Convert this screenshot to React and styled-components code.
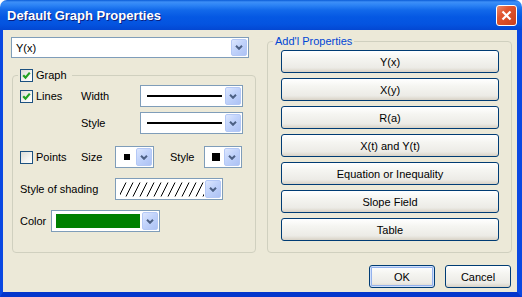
import React from 'react';
import styled, { createGlobalStyle } from 'styled-components';

const GlobalStyle = createGlobalStyle`
  html, body {
    margin: 0;
    padding: 0;
    background: #ffffff;
  }
  body {
    font-family: 'Liberation Sans', Arial, sans-serif;
    font-size: 11px;
    color: #000;
  }
  * {
    box-sizing: border-box;
  }
`;

const Window = styled.div`
  width: 522px;
  height: 297px;
  display: flex;
  flex-direction: column;
  border-radius: 7px 7px 0 0;
  overflow: hidden;
`;

const TitleBar = styled.div`
  height: 30px;
  flex: none;
  display: flex;
  align-items: center;
  justify-content: space-between;
  padding: 1px 5px 0 7px;
  background: linear-gradient(
    180deg,
    #0a5bd6 0px,
    #3d8ff7 2px,
    #2d84f5 5px,
    #1269ea 10px,
    #0558e3 17px,
    #0454e0 24px,
    #0347d2 30px
  );
`;

const Title = styled.span`
  font-family: 'Liberation Sans', Arial, sans-serif;
  font-weight: bold;
  font-size: 13px;
  color: #ffffff;
  text-shadow: 1px 1px 0 #0a1f7e;
`;

const CloseButton = styled.div`
  width: 21px;
  height: 21px;
  border: 1px solid #ffffff;
  border-radius: 3px;
  background: linear-gradient(135deg, #ec8a6c 0%, #e1562f 35%, #c9401b 100%);
  display: flex;
  align-items: center;
  justify-content: center;
`;

const Body = styled.div`
  flex: 1;
  background: #ece9d8;
  border-style: solid;
  border-color: #0a48e2;
  border-bottom-color: #0436cc;
  border-width: 0 5px 5px 3px;
  padding: 5px 5px 4px 8px;
  display: flex;
  flex-direction: column;
`;

const MainRow = styled.div`
  display: flex;
  gap: 11px;
  align-items: flex-start;
`;

const LeftColumn = styled.div`
  width: 245px;
  display: flex;
  flex-direction: column;
  padding-top: 2px;
`;

const Group = styled.fieldset`
  margin: ${(p) => p.$margin};
  width: ${(p) => p.$w}px;
  min-width: 0;
  border: 1px solid #d0d0bf;
  border-radius: 4px;
  padding: ${(p) => p.$pad};
`;

const Legend = styled.legend`
  padding: 0 ${(p) => p.$pr}px 0 2px;
  margin-left: ${(p) => p.$ml}px;
  height: 13px;
  line-height: 13px;
  display: flex;
  align-items: center;
  gap: 3px;
  color: ${(p) => p.$color || '#000'};
`;

const Row = styled.div`
  display: flex;
  align-items: center;
  height: 22px;
  margin-top: ${(p) => p.$top || 0}px;
`;

const Cell = styled.div`
  flex: none;
  width: ${(p) => p.$w}px;
  display: flex;
  align-items: center;
  gap: 3px;
`;

const Box = styled.span`
  flex: none;
  width: 13px;
  height: 13px;
  border: 1px solid #1c5180;
  background: linear-gradient(135deg, #dcdcd7 0%, #f4f4f1 60%, #ffffff 100%);
  display: flex;
  align-items: center;
  justify-content: center;
`;

const Combo = styled.div`
  flex: none;
  width: ${(p) => p.$w}px;
  height: ${(p) => p.$h || 22}px;
  border: 1px solid #7f9db9;
  background: #ffffff;
  padding: 1px;
  display: flex;
`;

const ComboValue = styled.div`
  flex: 1;
  display: flex;
  align-items: center;
  padding-left: ${(p) => p.$pl || 0}px;
`;

const ComboButton = styled.div`
  flex: none;
  width: 16px;
  border: 1px solid #b4c8f6;
  border-radius: 2px;
  background: linear-gradient(135deg, #dde7fe 0%, #c1d3fb 45%, #adc2f4 100%);
  display: flex;
  align-items: center;
  justify-content: center;
`;

const SolidLine = styled.div`
  width: 75px;
  height: 2px;
  background: #000;
`;

const Square = styled.div`
  width: ${(p) => p.$s}px;
  height: ${(p) => p.$s}px;
  background: #000;
`;

const Swatch = styled.div`
  width: 84px;
  height: 14px;
  background: ${(p) => p.$color};
`;

const Buttons = styled.div`
  display: flex;
  flex-direction: column;
  gap: 5px;
`;

const XPButton = styled.div`
  height: 23px;
  width: ${(p) => (p.$w ? `${p.$w}px` : 'auto')};
  border: 1px solid #003c74;
  border-radius: 3px;
  background: linear-gradient(180deg, #ffffff 0%, #f5f5f1 35%, #ecebe6 80%, #d8d2c6 100%);
  display: flex;
  align-items: center;
  justify-content: center;
  font-weight: 400;
  color: #000;
  box-shadow: ${(p) => (p.$default ? 'inset 0 0 0 1px #cfdffb, inset 0 0 0 2px #93b1ec' : 'none')};
`;

const Footer = styled.div`
  display: flex;
  justify-content: flex-end;
  gap: 10px;
  margin-top: 12px;
  padding-right: 1px;
`;

const Chevron = () => (
  <svg width="8" height="5" viewBox="0 0 8 5">
    <polyline points="1,0.8 4,3.8 7,0.8" fill="none" stroke="#4d6185" strokeWidth="2" />
  </svg>
);

const Check = () => (
  <svg width="9" height="9" viewBox="0 0 9 9">
    <path d="M1.2 4.2 L3.5 6.6 L7.8 1.6" fill="none" stroke="#21a121" strokeWidth="2.2" />
  </svg>
);

const Hatch = () => (
  <svg width="84" height="15" viewBox="0 0 84 15">
    {Array.from({ length: 14 }).map((_, i) => (
      <line
        key={i}
        x1={i * 7 - 1}
        y1="14.5"
        x2={i * 7 + 6}
        y2="0.5"
        stroke="#000"
        strokeWidth="1"
      />
    ))}
  </svg>
);

const Checkbox = ({ checked }) => <Box>{checked && <Check />}</Box>;

const Select = ({ w, h, pl, children }) => (
  <Combo $w={w} $h={h}>
    <ComboValue $pl={pl}>{children}</ComboValue>
    <ComboButton>
      <Chevron />
    </ComboButton>
  </Combo>
);

const kinds = ['Y(x)', 'X(y)', 'R(a)', 'X(t) and Y(t)', 'Equation or Inequality', 'Slope Field', 'Table'];

export default function App() {
  return (
    <>
      <GlobalStyle />
      <Window>
        <TitleBar>
          <Title>Default Graph Properties</Title>
          <CloseButton>
            <svg width="11" height="11" viewBox="0 0 11 11">
              <path d="M1.5 1.5 L9.5 9.5 M9.5 1.5 L1.5 9.5" stroke="#fff" strokeWidth="2.2" />
            </svg>
          </CloseButton>
        </TitleBar>
        <Body>
          <MainRow>
            <LeftColumn>
              <Select w={238} h={21} pl={3}>Y(x)</Select>
              <Group $w={244} $margin="11px 0 0 1px" $pad="3px 7px 20px 7px">
                <Legend $ml={-2} $pr={5}>
                  <Checkbox checked />
                  Graph
                </Legend>
                <Row>
                  <Cell $w={61}>
                    <Checkbox checked />
                    Lines
                  </Cell>
                  <Cell $w={59}>Width</Cell>
                  <Select w={103} pl={5}>
                    <SolidLine />
                  </Select>
                </Row>
                <Row $top={5}>
                  <Cell $w={61} />
                  <Cell $w={59}>Style</Cell>
                  <Select w={103} pl={5}>
                    <SolidLine />
                  </Select>
                </Row>
                <Row $top={12}>
                  <Cell $w={61}>
                    <Checkbox />
                    Points
                  </Cell>
                  <Cell $w={34}>Size</Cell>
                  <Select w={39} pl={7}>
                    <Square $s={6} />
                  </Select>
                  <Cell $w={16} />
                  <Cell $w={34}>Style</Cell>
                  <Select w={38} pl={6}>
                    <Square $s={8} />
                  </Select>
                </Row>
                <Row $top={10}>
                  <Cell $w={95}>Style of shading</Cell>
                  <Select w={108} pl={3}>
                    <Hatch />
                  </Select>
                </Row>
                <Row $top={10}>
                  <Cell $w={31}>Color</Cell>
                  <Select w={109} pl={3}>
                    <Swatch $color="#008000" />
                  </Select>
                </Row>
              </Group>
            </LeftColumn>
            <Group $w={245} $margin="0" $pad="2px 12px 11px 13px">
              <Legend $ml={-8} $pr={2} $color="#0046d5">
                Add'l Properties
              </Legend>
              <Buttons>
                {kinds.map((k) => (
                  <XPButton key={k}>{k}</XPButton>
                ))}
              </Buttons>
            </Group>
          </MainRow>
          <Footer>
            <XPButton $w={66} $default>
              OK
            </XPButton>
            <XPButton $w={66}>Cancel</XPButton>
          </Footer>
        </Body>
      </Window>
    </>
  );
}
